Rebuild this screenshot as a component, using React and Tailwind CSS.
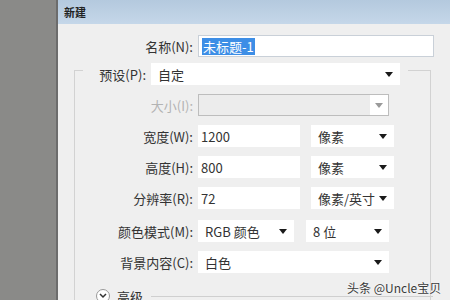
import React from 'react';

const Caret = ({ light }) => (
  <svg width="8" height="5" viewBox="0 0 8 5" className="shrink-0">
    <path d="M0 0 L8 0 L4 5 Z" fill={light ? '#9a9a9a' : '#1a1a1a'} />
  </svg>
);

const Select = ({ value, width }) => (
  <div className={`${width} h-[22px] bg-white flex items-center justify-between pl-[7px] pr-[7px] text-[#333]`}>
    <span>{value}</span>
    <Caret />
  </div>
);

const Row = ({ label, children, className = '' }) => (
  <div className={`flex items-center gap-[5px] ${className}`}>
    <div className="w-[118px] text-right text-[#333] whitespace-nowrap">{label}</div>
    {children}
  </div>
);

export default function App() {
  return (
    <div
      className="w-[450px] h-[300px] flex overflow-hidden bg-[#8b8b89] text-[13px] leading-none relative"
      style={{ fontFamily: '"Noto Sans CJK SC", "Noto Sans", sans-serif' }}
    >
      {/* grey workspace on the left */}
      <div className="w-[58px] shrink-0 bg-[#8a8a88] border-r-2 border-[#6c6c6c]" />

      {/* dialog */}
      <div className="flex-1 flex flex-col bg-[#efefef]">
        <div className="h-[24px] shrink-0 bg-gradient-to-b from-[#b4c9de] to-[#c5d7e9] flex items-center pl-[6px] text-[11px] font-bold text-[#222]">
          新建
        </div>

        {/* name */}
        <div className="flex items-center gap-[5px] mt-[11px]">
          <div className="w-[135px] text-right text-[#333]">名称(N):</div>
          <div className="w-[236px] h-[22px] bg-white border border-[#c9d0d8] flex items-center pl-[3px]">
            <span className="bg-[#3d8ee6] text-white px-[1px] py-[2px]">未标题-1</span>
          </div>
        </div>

        {/* group box */}
        <div className="ml-[16px] mt-[13px] w-[357px] flex-1 border-l border-t border-r border-[#d2d2d2] flex flex-col">
          <div className="ml-[8px] -mt-[8px] w-[325px] bg-[#efefef] flex items-center gap-[5px] pr-[8px]">
            <div className="w-[63px] text-right text-[#333]">预设(P):</div>
            <Select value="自定" width="w-[249px]" />
          </div>

          <div className="flex flex-col gap-[9px] mt-[9px]">
            <Row label={<span className="text-[#b3b3b3]">大小(I):</span>}>
              <div className="w-[191px] h-[22px] bg-[#ececec] border border-[#bdbdbd] flex items-center justify-end">
                <div className="w-[18px] h-full bg-white flex items-center justify-center">
                  <Caret light />
                </div>
              </div>
            </Row>

            <Row label="宽度(W):">
              <div className="w-[102px] h-[22px] bg-white flex items-center pl-[3px] text-[#333]">1200</div>
              <div className="w-[1px]" />
              <Select value="像素" width="w-[83px]" />
            </Row>

            <Row label="高度(H):">
              <div className="w-[102px] h-[22px] bg-white flex items-center pl-[3px] text-[#333]">800</div>
              <div className="w-[1px]" />
              <Select value="像素" width="w-[83px]" />
            </Row>

            <Row label="分辨率(R):">
              <div className="w-[102px] h-[22px] bg-white flex items-center pl-[3px] text-[#333]">72</div>
              <div className="w-[1px]" />
              <Select value="像素/英寸" width="w-[83px]" />
            </Row>

            <Row label="颜色模式(M):" className="mt-[2px]">
              <Select value="RGB 颜色" width="w-[96px]" />
              <div className="w-[2px]" />
              <Select value="8 位" width="w-[83px]" />
            </Row>

            <Row label="背景内容(C):">
              <Select value="白色" width="w-[191px]" />
            </Row>

            <div className="flex items-center mt-[7px] pl-[21px] whitespace-nowrap">
              <div className="w-[14px] h-[14px] shrink-0 rounded-full border border-[#999] bg-white flex items-center justify-center">
                <svg width="8" height="6" viewBox="0 0 8 6">
                  <path d="M1 1 L4 4 L7 1" stroke="#333" strokeWidth="1.5" fill="none" />
                </svg>
              </div>
              <span className="ml-[7px] text-[#333] shrink-0">高级</span>
              <div className="ml-[8px] w-[282px] shrink-0 border-t border-[#cfcfcf]" />
            </div>
          </div>
        </div>
      </div>

      {/* watermark */}
      <div className="absolute left-[347px] top-[282px] whitespace-nowrap text-[12px] text-[#3a3a3a] [text-shadow:0_0_2px_#fff]">
        头条 @Uncle宝贝
      </div>
    </div>
  );
}
